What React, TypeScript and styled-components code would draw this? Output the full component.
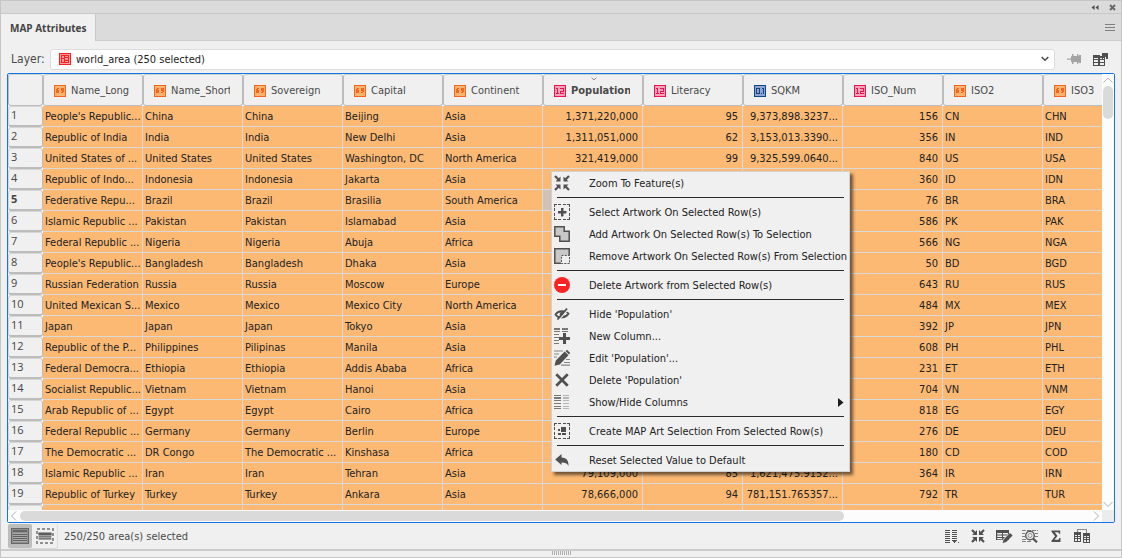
import React from "react";
import styled, { createGlobalStyle, css } from "styled-components";

const UI = `"DejaVu Sans Condensed", "DejaVu Sans", sans-serif`;
const HUMANIST = `"Open Sans", "Noto Sans", sans-serif`;

const Global = createGlobalStyle`
  * { box-sizing: border-box; }
  body { margin: 0; background: #f0f0f0; font-family: ${UI}; font-size: 11px; color: #222; }
  button, select { font: inherit; color: inherit; }
`;

/* ---------- window ---------- */

const Panel = styled.main`
  display: flex;
  flex-direction: column;
  height: 100vh;
  border: 1px solid #c6c6c6;
  background: #f0f0f0;
  overflow: hidden;
`;

const TitleBar = styled.header`
  display: flex;
  justify-content: flex-end;
  align-items: center;
  gap: 10px;
  height: 13px;
  padding-right: 5px;
  background: #dbdbdb;
  border-bottom: 1px solid #c8c8c8;
  flex: none;
`;

const PlainButton = styled.button`
  display: flex;
  align-items: center;
  justify-content: center;
  padding: 0;
  border: 0;
  background: none;
`;

const TabStrip = styled.div`
  display: flex;
  justify-content: space-between;
  height: 27px;
  background: #dbdbdb;
  flex: none;
`;

const Tab = styled.button`
  padding: 0 8px 0 9px;
  border: 0;
  border-right: 1px solid #c8c8c8;
  background: #f0f0f0;
  font-family: ${HUMANIST};
  font-size: 10px;
  font-weight: 700;
  color: #444;
  white-space: nowrap;
`;

const StripRest = styled.div`
  display: flex;
  flex: 1;
  justify-content: flex-end;
  padding-right: 6px;
  border-bottom: 1px solid #cccccc;
`;

/* ---------- layer row ---------- */

const LayerRow = styled.div`
  display: flex;
  align-items: center;
  height: 32px;
  padding: 4px 8px 0 10px;
  flex: none;
`;

const LayerLabel = styled.label`
  width: 39px;
  font-size: 12px;
  color: #4a4a4a;
`;

const SelectBox = styled.div`
  position: relative;
  flex: 1;
  height: 21px;
  margin-right: 6px;
`;

const LayerSelect = styled.select`
  appearance: none;
  width: 100%;
  height: 21px;
  padding: 0 24px 0 25px;
  border: 1px solid #dcdcdc;
  border-radius: 3px;
  background: #fff;
`;

const SelectIcon = styled.span<{ $end?: boolean }>`
  position: absolute;
  top: 0;
  bottom: 0;
  ${(p) => (p.$end ? "right: 6px;" : "left: 9px;")}
  display: flex;
  align-items: center;
  pointer-events: none;
`;

const IconButton = styled(PlainButton)`
  width: 26px;
  height: 20px;
`;

/* ---------- table ---------- */

const TableFrame = styled.section`
  display: grid;
  grid-template-columns: minmax(0, 1fr) 12px;
  grid-template-rows: minmax(0, 1fr) 12px;
  flex: 1;
  min-height: 0;
  margin: 0 6px;
  border: 1px solid #1473e6;
  border-radius: 2px;
  background: #fafafa;
`;

const TableView = styled.div`
  overflow: hidden;
`;

const Table = styled.table`
  table-layout: fixed;
  width: 1135px;
  border-collapse: separate;
  border-spacing: 0;
`;

const HeadCell = styled.th<{ $active?: boolean }>`
  position: relative;
  height: 32px;
  padding: 1px 12px 0 10px;
  border: 1px solid #bcbcbc;
  border-top-color: #d0d0d0;
  border-radius: 3px;
  background: #f0f0f0;
  font-weight: ${(p) => (p.$active ? 700 : 400)};
  color: #4a4a4a;
  text-align: left;
`;

const HeadContent = styled.span`
  display: flex;
  align-items: center;
  gap: 5px;
`;

const HeadLabel = styled.span`
  flex: 1;
  overflow: hidden;
  white-space: nowrap;
  line-height: 16px;
`;

const SortMark = styled.svg`
  position: absolute;
  top: 2px;
  left: 47px;
`;

const RowHead = styled.th<{ $active?: boolean }>`
  height: 21px;
  padding: 0 0 3px 2px;
  border: 1px solid #d6d6d6;
  border-right-color: #bcbcbc;
  border-bottom: 2px solid #bcbcbc;
  border-radius: 3px;
  background: #f0f0f0;
  font-size: 11px;
  line-height: 15px;
  font-family: ${HUMANIST};
  font-weight: ${(p) => (p.$active ? 700 : 400)};
  color: #444;
  text-align: left;
`;

const Cell = styled.td<{ $num?: boolean; $current?: boolean }>`
  height: 21px;
  padding: 0 2px;
  border-right: 1px solid #d9d9d9;
  border-bottom: 1px solid #d9d9d9;
  background: ${(p) => (p.$current ? "#d3c1b3" : "#fbb974")};
  line-height: 19px;
  white-space: nowrap;
  overflow: hidden;
  ${(p) => p.$num && css`
    padding-right: 4px;
    text-align: right;
  `}
`;

const ScrollBar = styled.div<{ $vertical?: boolean }>`
  display: flex;
  flex-direction: ${(p) => (p.$vertical ? "column" : "row")};
  align-items: center;
  background: #fcfcfc;
`;

const ScrollTrack = styled.div<{ $vertical?: boolean }>`
  flex: 1;
  ${(p) => (p.$vertical ? "width: 10px;" : "height: 10px;")}
`;

const ScrollThumb = styled.div<{ $vertical?: boolean }>`
  width: ${(p) => (p.$vertical ? "100%" : "77%")};
  height: ${(p) => (p.$vertical ? "8%" : "100%")};
  border-radius: 5px;
  background: #dadada;
`;

const ScrollArrow = styled.svg`
  display: block;
  flex: none;
`;

const Corner = styled.div`
  background: #ececec;
`;

/* ---------- status bar ---------- */

const StatusBar = styled.footer`
  display: flex;
  align-items: center;
  height: 26px;
  padding: 0 26px 0 7px;
  flex: none;
`;

const ModeGroup = styled.div`
  display: flex;
  margin-right: 6px;
  border: solid #dcdcdc;
  border-width: 0 1px 1px 0;
  border-radius: 3px;
`;

const ModeButton = styled(PlainButton)<{ $on?: boolean }>`
  width: ${(p) => (p.$on ? "24px" : "25px")};
  height: 24px;
  background: ${(p) => (p.$on ? "#bdbdbd" : "transparent")};
  border-radius: 2px;
`;

const Status = styled.span`
  flex: 1;
  color: #4a4a4a;
`;

const Grip = styled.div`
  display: flex;
  justify-content: center;
  gap: 1px;
  height: 8px;
  border-top: 2px solid #cccccc;
  flex: none;
`;

const GripBar = styled.i`
  width: 1px;
  height: 4px;
  background: #b0b0b0;
`;

/* ---------- context menu ---------- */

const Menu = styled.div`
  position: absolute;
  left: 551px;
  top: 171px;
  width: 299px;
  border: 1px solid #d2d2d2;
  background: #f0f0f0;
  box-shadow: 3px 3px 3px rgba(0, 0, 0, 0.55);
`;

const MenuItem = styled.button`
  display: flex;
  align-items: center;
  gap: 19px;
  width: 100%;
  height: 22px;
  padding: 0 5px 0 2px;
  border: 0;
  background: none;
  text-align: left;
  white-space: nowrap;
`;

const MenuText = styled.span`
  flex: 1;
  min-width: 0;
`;

const Divider = styled.hr`
  height: 1px;
  margin: 3px 5px;
  border: 0;
  background: #2b2b2b;
`;

/* ---------- icons ---------- */

const D = "#505050";

const IconSvg = styled.svg`
  display: block;
  flex: none;
`;

function Ico({ w = 16, h = 16, crisp, children }: { w?: number; h?: number; crisp?: boolean; children: React.ReactNode }) {
  return (
    <IconSvg width={w} height={h} viewBox={`0 0 ${w} ${h}`} fill="none" aria-hidden="true" shapeRendering={crisp ? "crispEdges" : "auto"}>
      {children}
    </IconSvg>
  );
}

type FieldKind = "text" | "int" | "real";

function FieldIcon({ kind }: { kind: FieldKind }) {
  const tone = { text: ["#f4661f", "#fbb46e"], int: ["#ec1257", "#f6a5b5"], real: ["#12467f", "#8fa3d6"] }[kind];
  return (
    <Ico w={12} h={12} crisp>
      <rect x="0" y="0" width="12" height="12" fill={tone[0]} />
      <rect x="1" y="1" width="10" height="10" fill={tone[1]} />
      {kind === "text" && <path d="M3 3h2v1H4v1h1v3H2V4h1zM7 3h3v4H9v1H7V7h1V6H7z" fill={tone[0]} />}
      {kind === "int" && <path d="M2 3h2v5h1v1H2V8h1V4H2zM6 3h4v4H7v1h3v1H6V6h3V4H6z" fill={tone[0]} />}
      {kind === "real" && <path fillRule="evenodd" d="M2 3h4v6H2zM3 4v4h2V4zM7 8h1v1H7zM8 3h2v6H9V4H8z" fill={tone[0]} />}
    </Ico>
  );
}

const LayerIcon = () => (
  <Ico w={12} h={12} crisp>
    <rect width="12" height="12" fill="#ff1f1f" />
    <rect x="1" y="1" width="10" height="10" fill="#ff9c9c" />
    <path d="M2 2h8v8H2zM3 3v2h2V3zM6 3v1h3V3zM6 5v2h3V5zM3 6v3h2V6zM6 8v1h3V8z" fillRule="evenodd" fill="#ff1f1f" />
  </Ico>
);

const ArrowsIn = () => (
  <Ico>
    <path d="M1 1l4 4M15 1l-4 4M1 15l4-4M15 15l-4-4" stroke={D} strokeWidth="2.2" />
    <path d="M6.500 1.500v5h-5zM9.500 1.500v5h5zM6.500 14.500v-5h-5zM9.500 14.500v-5h5z" fill={D} />
  </Ico>
);
const dashed = "M0 0h3v1H1v2H0zM4 0h3v1H4zM9 0h3v1H9zM13 0h3v3h-1V1h-2zM15 4h1v3h-1zM15 9h1v3h-1zM15 13h1v3h-3v-1h2zM9 15h3v1H9zM4 15h3v1H4zM0 13h1v2h2v1H0zM0 9h1v3H0zM0 4h1v3H0z";
const SelectArt = () => (
  <Ico crisp><path d={dashed} fill={D} /><path d="M7 4h2v3h3v2H9v3H7V9H4V7h3z" fill={D} stroke={D} strokeWidth=".5" /></Ico>
);
const AddArt = () => (
  <Ico><path d="M.8.8h9.400v4.400h5v10H5.800v-5h-5z" fill="#c8c8c8" stroke={D} strokeWidth="1.500" /></Ico>
);
const RemoveArt = () => (
  <Ico>
    <path d="M.8.8h14.400v14.400H.8z" fill="#c8c8c8" stroke={D} strokeWidth="1.500" />
    <path d="M7 7h9v9H7z" fill="#f0f0f0" />
    <path d="M7.500 7.500h8v8h-8z" stroke={D} strokeDasharray="2 1.200" />
  </Ico>
);
const StopIcon = () => (
  <Ico><circle cx="8" cy="8" r="8" fill="#fb2424" /><path d="M4 7h8v2H4z" fill="#fff" /></Ico>
);
const HideIcon = () => (
  <Ico>
    <path d="M1.500 8.500C4 4.500 11.500 4 14.500 7.500 12 12 4.500 13 1.500 8.500z" stroke={D} strokeWidth="1.900" />
    <circle cx="8" cy="8.300" r="2.300" fill={D} />
    <path d="M4.500 14.500L14 3.500" stroke="#f0f0f0" strokeWidth="1.200" />
    <path d="M3.500 13.500L13 2.500" stroke={D} strokeWidth="1.900" />
  </Ico>
);
const NewColumn = () => (
  <Ico crisp>
    <path d="M0 0h6v2H0zM8 0h6v2H8zM0 3h6v1H0zM8 3h6v1H8zM0 6h5v1H0zM0 9h5v1H0zM0 12h5v1H0zM0 15h5v1H0z" fill="#777" />
    <path d="M9 5h3v4h4v3h-4v4H9v-4H5V9h4z" fill={D} />
  </Ico>
);
const EditIcon = () => (
  <Ico>
    <path d="M0 1h9M0 4h5M0 7h3M12 9.500h4M10 12.500h6M7 15.200h9" stroke="#858585" strokeWidth="1.200" />
    <path d="M.5 15.800l1.300-5.300L10.700 1.500l3.800 3.800-8.800 9.200zM11.500 1L13-.2 16.200 3l-1.200 1.600z" fill={D} />
  </Ico>
);
const CrossIcon = () => (
  <Ico><path d="M2.300 2.300l11.400 11.400M13.700 2.300L2.300 13.700" stroke={D} strokeWidth="2.700" /></Ico>
);
const ColumnsIcon = () => (
  <Ico crisp>
    <path d="M0 1h7v1H0zM0 3h7v2H0zM0 6h7v1H0zM0 9h7v1H0zM0 12h7v1H0zM0 14h7v1H0z" fill="#777" />
    <path d="M9 1h6v1H9zM9 3h6v2H9zM9 6h6v1H9zM9 9h6v1H9zM9 12h6v1H9zM9 14h6v1H9z" fill="#b5b5b5" />
  </Ico>
);
const CreateSel = () => (
  <Ico crisp><path d={dashed} fill={D} /><path d="M7 4h5v5H7zM4 6h2v2H4zM4 10h3v2H4zM8 10h4v2H8z" fill={D} /></Ico>
);
const ResetIcon = () => (
  <Ico><path d="M1.200 7.500L7.500 2v3.500c5 .2 7.300 3 7 8.500-1.500-3-3.500-3.700-7-3.600V13z" fill={D} /></Ico>
);
const SubArrow = () => (
  <Ico w={6} h={9}><path d="M0 0l5.500 4.500L0 9z" fill="#1c1c1c" /></Ico>
);

const Chevrons = () => (
  <Ico w={8} h={5}><path d="M3.500 0v5L.5 2.500zM7.500 0v5l-3-2.500z" fill="#4a4a4a" /></Ico>
);
const CloseX = () => (
  <Ico w={7} h={7}><path d="M1 1l5 5M6 1L1 6" stroke="#6a6a6a" strokeWidth="2" /></Ico>
);
const MenuLines = () => (
  <Ico w={10} h={7} crisp><path d="M0 0h10v1H0zM0 3h10v1H0zM0 6h10v1H0z" fill="#808080" /></Ico>
);
const ChevronDown = () => (
  <Ico w={8} h={6}><path d="M.7 1l3.300 3.200L7.300 1" stroke="#4a4a4a" strokeWidth="1.500" /></Ico>
);
const PinIcon = () => (
  <Ico w={14} h={12}><path d="M0 5.500h4V3.500l1-1V1h1.500v2H10V1h1.200v2l1-1H14v8h-1.800l-1-1v2H10V9H6.500v2H5V9.500l-1-1V6.800H0z" fill="#a3a3a3" /></Ico>
);
const ExportTable = () => (
  <Ico w={15} h={14} crisp>
    <path fillRule="evenodd" d="M0 3h12v11H0zM1 6v1h4V6zM7 6v1h4V6zM1 8v2h4V8zM7 8v2h4V8zM1 11v2h4v-2zM7 11v2h4v-2z" fill={D} />
    <path d="M9 1h5v5h-1V4l-3 2H9l-1-1 2-2H9z" fill={D} stroke={D} />
    <path d="M7 3h2v1H7zM12 7h1v1h-1z" fill="#f0f0f0" />
  </Ico>
);
const ListMode = () => (
  <Ico w={18} h={16} crisp>
    <path d="M0 0h18v16H0z" fill="#686868" /><path d="M1 1h16v14H1z" fill="#8e8e8e" />
    <path d="M2 2h14v2H2z" fill="#666" /><path d="M2 5h14v1H2zM2 7h14v1H2zM2 9h14v1H2zM2 11h14v1H2zM2 13h14v1H2z" fill="#ababab" />
    <path d="M2 6h14v1H2zM2 8h14v1H2zM2 10h14v1H2zM2 12h14v1H2z" fill="#606060" />
  </Ico>
);
const SelMode = () => (
  <Ico w={18} h={16}>
    <rect x="1" y="1" width="16" height="14" stroke="#909090" strokeWidth="2" strokeDasharray="3 2" />
    <path d="M2.500 4h13v8h-13z" fill="#a0a0a0" /><path d="M2.500 5h13v2h-13z" fill="#5c5c5c" />
    <path d="M3 8.500h12M3 10.500h12" stroke="#7c7c7c" />
  </Ico>
);
const ColumnPick = () => (
  <Ico w={14} h={14} crisp>
    <path d="M0 1h5v1H0zM7 1h5v1H7zM0 3h5v1H0zM7 3h5v1H7zM0 5h5v1H0zM7 5h5v1H7zM0 7h5v1H0zM7 7h5v1H7zM0 9h5v1H0zM7 9h5v1H7zM0 11h5v1H0zM0 13h5v1H0zM7 11h5v1h-1v1h-1v1H9v-1H8v-1H7zM13 13h1v1h-1z" fill={D} />
  </Ico>
);
const ArrowsSmall = () => (
  <Ico w={14} h={14}>
    <path d="M1 1l4 4M13 1L9 5M1 13l4-4M13 13L9 9" stroke={D} strokeWidth="2.200" />
    <path d="M6 1v5H1zM8 1v5h5zM6 13V8H1zM8 13V8h5z" fill={D} />
  </Ico>
);
const EditTable = () => (
  <Ico w={17} h={14}>
    <path fillRule="evenodd" d="M0 1h13v10H0zM1.200 4v1.500H6V4zM7 4v1.500h5V4zM1.200 6.500V8H6V6.500zM7 6.500V8h5V6.500zM1.200 9v1.200H6V9z" fill={D} />
    <path d="M6 14l1-4 7.500-6.500L17 6l-7.500 7z" fill="#f0f0f0" />
    <path d="M6.500 14l1.200-3.500L14 4l2.600 2.500-6.400 6.500z" fill={D} />
  </Ico>
);
const FindIcon = () => (
  <Ico w={16} h={14}>
    <path d="M0 1.500h16M0 4.500h3M13 4.500h3M0 7.500h3M13 7.500h3M0 10.500h4M0 12.500h10" stroke="#808080" strokeDasharray="4 1" />
    <circle cx="8" cy="6.500" r="4.300" fill="#f0f0f0" stroke="#606060" strokeWidth="1.500" />
    <circle cx="8" cy="6.500" r="2" stroke="#909090" />
    <path d="M11 9.500l4 3.800" stroke={D} strokeWidth="2.200" />
  </Ico>
);
const SumIcon = () => (
  <Ico w={10} h={12}><path d="M.5.5h8.700v3.200H8L7.300 2.200H3.800L6.500 6l-3 3.700h4L8.300 8h1.200v4H.5v-1.200L4 6.300.5 1.800z" fill={D} /></Ico>
);
const LinkTables = () => (
  <Ico w={16} h={14} crisp>
    <path d="M3 0h10v4h-1V1H4v2H3z" fill="#8c8c8c" />
    <path fillRule="evenodd" d="M0 3h7v10H0zM1 6v1h2V6zM4 6v1h2V6zM1 8v1h2V8zM4 8v1h2V8zM1 10v2h2v-2zM4 10v2h2v-2zM9 4h7v10H9zM10 7v1h2V7zM13 7v1h2V7zM10 9v1h2V9zM13 9v1h2V9zM10 11v2h2v-2zM13 11v2h2v-2z" fill={D} />
  </Ico>
);

/* ---------- data ---------- */

const columns: { name: string; kind: FieldKind; active?: boolean }[] = [
  { name: "Name_Long", kind: "text" },
  { name: "Name_Short", kind: "text" },
  { name: "Sovereign", kind: "text" },
  { name: "Capital", kind: "text" },
  { name: "Continent", kind: "text" },
  { name: "Population", kind: "int", active: true },
  { name: "Literacy", kind: "int" },
  { name: "SQKM", kind: "real" },
  { name: "ISO_Num", kind: "int" },
  { name: "ISO2", kind: "text" },
  { name: "ISO3", kind: "text" },
];

const rows: string[][] = [
  ["People's Republic...", "China", "China", "Beijing", "Asia", "1,371,220,000", "95", "9,373,898.3237...", "156", "CN", "CHN"],
  ["Republic of India", "India", "India", "New Delhi", "Asia", "1,311,051,000", "62", "3,153,013.3390...", "356", "IN", "IND"],
  ["United States of ...", "United States", "United States", "Washington, DC", "North America", "321,419,000", "99", "9,325,599.0640...", "840", "US", "USA"],
  ["Republic of Indo...", "Indonesia", "Indonesia", "Jakarta", "Asia", "", "", "", "360", "ID", "IDN"],
  ["Federative Repu...", "Brazil", "Brazil", "Brasilia", "South America", "", "", "", "76", "BR", "BRA"],
  ["Islamic Republic ...", "Pakistan", "Pakistan", "Islamabad", "Asia", "", "", "", "586", "PK", "PAK"],
  ["Federal Republic ...", "Nigeria", "Nigeria", "Abuja", "Africa", "", "", "", "566", "NG", "NGA"],
  ["People's Republic...", "Bangladesh", "Bangladesh", "Dhaka", "Asia", "", "", "", "50", "BD", "BGD"],
  ["Russian Federation", "Russia", "Russia", "Moscow", "Europe", "", "", "", "643", "RU", "RUS"],
  ["United Mexican S...", "Mexico", "Mexico", "Mexico City", "North America", "", "", "", "484", "MX", "MEX"],
  ["Japan", "Japan", "Japan", "Tokyo", "Asia", "", "", "", "392", "JP", "JPN"],
  ["Republic of the P...", "Philippines", "Pilipinas", "Manila", "Asia", "", "", "", "608", "PH", "PHL"],
  ["Federal Democra...", "Ethiopia", "Ethiopia", "Addis Ababa", "Africa", "", "", "", "231", "ET", "ETH"],
  ["Socialist Republic...", "Vietnam", "Vietnam", "Hanoi", "Asia", "", "", "", "704", "VN", "VNM"],
  ["Arab Republic of ...", "Egypt", "Egypt", "Cairo", "Africa", "", "", "", "818", "EG", "EGY"],
  ["Federal Republic ...", "Germany", "Germany", "Berlin", "Europe", "", "", "", "276", "DE", "DEU"],
  ["The Democratic ...", "DR Congo", "The Democratic ...", "Kinshasa", "Africa", "", "", "", "180", "CD", "COD"],
  ["Islamic Republic ...", "Iran", "Iran", "Tehran", "Asia", "79,109,000", "85", "1,621,475.9152...", "364", "IR", "IRN"],
  ["Republic of Turkey", "Turkey", "Turkey", "Ankara", "Asia", "78,666,000", "94", "781,151.765357...", "792", "TR", "TUR"],
  ["", "", "", "", "", "", "", "", "", "", ""],
];

const CURRENT_ROW = 4;
const CURRENT_COL = 5;

type Entry = { label: string; icon: React.ReactNode; sub?: boolean };
const menuGroups: Entry[][] = [
  [{ label: "Zoom To Feature(s)", icon: <ArrowsIn /> }],
  [
    { label: "Select Artwork On Selected Row(s)", icon: <SelectArt /> },
    { label: "Add Artwork On Selected Row(s) To Selection", icon: <AddArt /> },
    { label: "Remove Artwork On Selected Row(s) From Selection", icon: <RemoveArt /> },
  ],
  [{ label: "Delete Artwork from Selected Row(s)", icon: <StopIcon /> }],
  [
    { label: "Hide 'Population'", icon: <HideIcon /> },
    { label: "New Column...", icon: <NewColumn /> },
    { label: "Edit 'Population'...", icon: <EditIcon /> },
    { label: "Delete 'Population'", icon: <CrossIcon /> },
    { label: "Show/Hide Columns", icon: <ColumnsIcon />, sub: true },
  ],
  [{ label: "Create MAP Art Selection From Selected Row(s)", icon: <CreateSel /> }],
  [{ label: "Reset Selected Value to Default", icon: <ResetIcon /> }],
];

const tools: [string, React.ReactNode][] = [
  ["Show or hide columns", <ColumnPick />],
  ["Zoom to features", <ArrowsSmall />],
  ["Edit schema", <EditTable />],
  ["Find", <FindIcon />],
  ["Statistics", <SumIcon />],
  ["Join tables", <LinkTables />],
];

const arrowPaths = { up: "M1.500 8.500L6 4l4.500 4.500", down: "M1.500 4L6 8.500 10.500 4", left: "M8 1.500L3.500 6 8 10.500", right: "M4 1.500L8.500 6 4 10.500" };

function Arrow({ dir }: { dir: keyof typeof arrowPaths }) {
  return (
    <ScrollArrow width="12" height="12" viewBox="0 0 12 12" fill="none" aria-hidden="true">
      <path d={arrowPaths[dir]} stroke="#b0b0b0" />
    </ScrollArrow>
  );
}

export default function App() {
  return (
    <>
      <Global />
      <Panel>
        <TitleBar>
          <PlainButton aria-label="Collapse"><Chevrons /></PlainButton>
          <PlainButton aria-label="Close"><CloseX /></PlainButton>
        </TitleBar>
        <TabStrip>
          <Tab>MAP Attributes</Tab>
          <StripRest>
            <PlainButton aria-label="Panel menu"><MenuLines /></PlainButton>
          </StripRest>
        </TabStrip>

        <LayerRow>
          <LayerLabel htmlFor="layer">Layer:</LayerLabel>
          <SelectBox>
            <LayerSelect id="layer">
              <option>world_area (250 selected)</option>
            </LayerSelect>
            <SelectIcon><LayerIcon /></SelectIcon>
            <SelectIcon $end><ChevronDown /></SelectIcon>
          </SelectBox>
          <IconButton aria-label="Pin layer"><PinIcon /></IconButton>
          <IconButton aria-label="Export table"><ExportTable /></IconButton>
        </LayerRow>

        <TableFrame>
          <TableView>
            <Table>
              <colgroup>
                <col width="35" />
                {columns.map((c) => <col key={c.name} width="100" />)}
              </colgroup>
              <thead>
                <tr>
                  <HeadCell />
                  {columns.map((c) => (
                    <HeadCell key={c.name} scope="col" $active={c.active}>
                      {c.active && (
                        <SortMark width="6" height="4" viewBox="0 0 6 4" fill="none" aria-hidden="true">
                          <path d="M.5.5L3 3 5.500.5" stroke="#8a8a8a" />
                        </SortMark>
                      )}
                      <HeadContent>
                        <FieldIcon kind={c.kind} />
                        <HeadLabel>{c.name}</HeadLabel>
                      </HeadContent>
                    </HeadCell>
                  ))}
                </tr>
              </thead>
              <tbody>
                {rows.map((row, r) => (
                  <tr key={r}>
                    <RowHead scope="row" $active={r === CURRENT_ROW}>{r + 1}</RowHead>
                    {row.map((value, c) => (
                      <Cell key={c} $num={columns[c].kind !== "text"} $current={r === CURRENT_ROW && c === CURRENT_COL}>
                        {value}
                      </Cell>
                    ))}
                  </tr>
                ))}
              </tbody>
            </Table>
          </TableView>
          <ScrollBar $vertical>
            <Arrow dir="up" />
            <ScrollTrack $vertical><ScrollThumb $vertical /></ScrollTrack>
            <Arrow dir="down" />
          </ScrollBar>
          <ScrollBar>
            <Arrow dir="left" />
            <ScrollTrack><ScrollThumb /></ScrollTrack>
            <Arrow dir="right" />
          </ScrollBar>
          <Corner />
        </TableFrame>

        <StatusBar>
          <ModeGroup>
            <ModeButton $on aria-label="Show all rows"><ListMode /></ModeButton>
            <ModeButton aria-label="Show selected rows"><SelMode /></ModeButton>
          </ModeGroup>
          <Status>250/250 area(s) selected</Status>
          {tools.map(([name, icon]) => (
            <IconButton key={name} aria-label={name}>{icon}</IconButton>
          ))}
        </StatusBar>
        <Grip>
          {Array.from({ length: 10 }, (_, i) => <GripBar key={i} />)}
        </Grip>
      </Panel>

      <Menu role="menu">
        {menuGroups.map((group, g) => (
          <React.Fragment key={g}>
            {g > 0 && <Divider />}
            {group.map((e) => (
              <MenuItem key={e.label} role="menuitem">
                {e.icon}
                <MenuText>{e.label}</MenuText>
                {e.sub && <SubArrow />}
              </MenuItem>
            ))}
          </React.Fragment>
        ))}
      </Menu>
    </>
  );
}
